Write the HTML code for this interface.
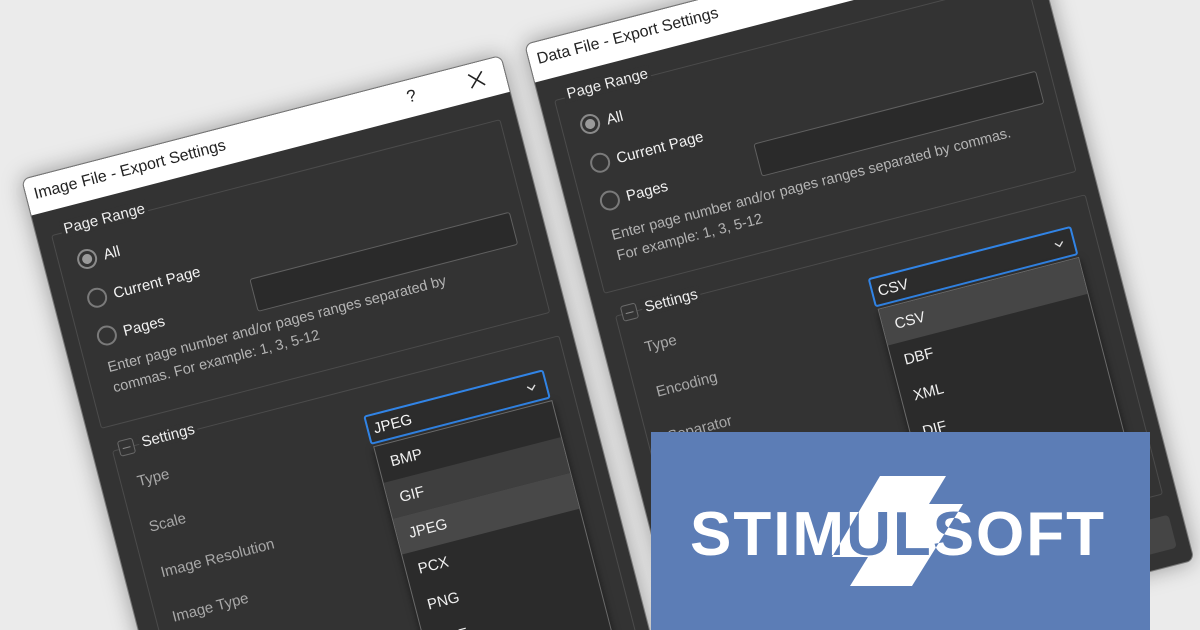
<!DOCTYPE html>
<html><head><meta charset="utf-8">
<style>
*{margin:0;padding:0;box-sizing:border-box}
html,body{width:1200px;height:630px;overflow:hidden;background:#ebebeb;font-family:"Liberation Sans",Arial,sans-serif}
#wrap{position:relative;width:1200px;height:630px;overflow:hidden;background:#ebebeb}
.dlg{position:absolute;transform-origin:0 0;transform:rotate(-14.5deg);background:#333;border:1px solid #777;border-radius:8px;box-shadow:0 0 22px rgba(0,0,0,.35);overflow:hidden}
.dlg *{position:absolute}
.tb{left:0;top:0;right:0;height:37px;background:#fff;}
.tt{left:8px;top:9px;font-size:16px;color:#222;white-space:nowrap}
.grp{border:1px solid #4b4b4b;border-radius:3px}
.lbl{font-size:15px;color:#eee;white-space:nowrap;background:#333;padding:0 3px}
.rad{width:20px;height:20px;border:2px solid #7a7a7a;border-radius:50%;background:#333}
.rad.on{border-color:#8a8a8a}
.rad.on::after{content:"";position:absolute;left:3px;top:3px;width:10px;height:10px;border-radius:50%;background:#9a9a9a}
.rt{font-size:15px;color:#f2f2f2;white-space:nowrap}
.inp{background:#2a2a2a;border:1px solid #606060;border-radius:3px}
.hint{font-size:14.5px;color:#b4b4b4;white-space:nowrap;line-height:21px}
.sl{font-size:15px;color:#a8a8a8;white-space:nowrap}
.combo{background:#2c2c2c;border:2px solid #3184e6;border-radius:3px}
.combo span{left:5px;top:5px;font-size:15px;color:#f4f4f4}
.list{background:#2b2b2b;border:1px solid #6a6a6a;box-shadow:0 3px 8px rgba(0,0,0,.5);overflow:hidden}
.it{left:0;right:0;height:37px;font-size:15px;color:#f0f0f0;padding:10px 0 0 12px}
.mn{width:16px;height:16px;border:1px solid #6a6a6a;border-radius:3px;background:#333}
.mn::after{content:"";position:absolute;left:3px;top:7px;width:8px;height:1px;background:#888}
</style></head><body><div id="wrap">

<div class="dlg" style="left:21px;top:179px;width:496px;height:800px">
  <div class="tb"><div class="tt">Image File - Export Settings</div>
    <div style="left:393px;top:7px;font-size:17px;color:#222">?</div>
    <svg style="left:456px;top:8px" width="18" height="18" viewBox="0 0 18 18"><path d="M2 2L16 16M16 2L2 16" stroke="#222" stroke-width="1.6"/></svg>
  </div>
  <div class="grp" style="left:14px;top:61px;width:464px;height:200px"></div>
  <div class="lbl" style="left:25px;top:50px">Page Range</div>
  <div class="rad on" style="left:33px;top:83px"></div><div class="rt" style="left:60px;top:85px">All</div>
  <div class="rad" style="left:33px;top:123px"></div><div class="rt" style="left:60px;top:125px">Current Page</div>
  <div class="rad" style="left:33px;top:162px"></div><div class="rt" style="left:60px;top:164px">Pages</div>
  <div class="inp" style="left:195px;top:153px;width:269px;height:34px"></div>
  <div class="hint" style="left:36px;top:194px">Enter page number and/or pages ranges separated by<br>commas. For example: 1, 3, 5-12</div>
  <div class="grp" style="left:19px;top:285px;width:462px;height:520px"></div>
  <div class="mn" style="left:26px;top:277px"></div>
  <div class="lbl" style="left:47px;top:276px">Settings</div>
  <div class="sl" style="left:36px;top:313px">Type</div>
  <div class="sl" style="left:36px;top:360px">Scale</div>
  <div class="sl" style="left:36px;top:407px">Image Resolution</div>
  <div class="sl" style="left:36px;top:453px">Image Type</div>
  <div class="sl" style="left:36px;top:499px">Dithering Type</div>
  <div class="combo" style="left:271px;top:314px;width:186px;height:30px"><span>JPEG</span>
    <svg style="left:163px;top:9px" width="10" height="8" viewBox="0 0 10 8"><path d="M1 2L5 6L9 2" stroke="#ddd" stroke-width="1.4" fill="none"/></svg></div>
  <div class="list" style="left:273px;top:346px;width:185px;height:260px">
    <div class="it" style="top:0">BMP</div>
    <div class="it" style="top:37px;background:#3e3e3e">GIF</div>
    <div class="it" style="top:74px;background:#484848">JPEG</div>
    <div class="it" style="top:111px">PCX</div>
    <div class="it" style="top:148px">PNG</div>
    <div class="it" style="top:185px">TIFF</div>
  </div>
</div>

<div class="dlg" style="left:524px;top:44px;width:520px;height:668px">
  <div class="tb" style="height:39px"><div class="tt">Data File - Export Settings</div></div>
  <div class="grp" style="left:14px;top:61px;width:488px;height:200px"></div>
  <div class="lbl" style="left:25px;top:50px">Page Range</div>
  <div class="rad on" style="left:33px;top:83px"></div><div class="rt" style="left:60px;top:85px">All</div>
  <div class="rad" style="left:33px;top:123px"></div><div class="rt" style="left:60px;top:125px">Current Page</div>
  <div class="rad" style="left:33px;top:162px"></div><div class="rt" style="left:60px;top:164px">Pages</div>
  <div class="inp" style="left:196px;top:153px;width:292px;height:34px"></div>
  <div class="hint" style="left:36px;top:197px">Enter page number and/or pages ranges separated by commas.<br>For example: 1, 3, 5-12</div>
  <div class="grp" style="left:19px;top:285px;width:486px;height:310px"></div>
  <div class="mn" style="left:26px;top:277px"></div>
  <div class="lbl" style="left:47px;top:276px">Settings</div>
  <div class="sl" style="left:40px;top:315px">Type</div>
  <div class="sl" style="left:40px;top:361px">Encoding</div>
  <div class="sl" style="left:40px;top:407px">Separator</div>
  <div class="combo" style="left:273px;top:312px;width:210px;height:30px"><span>CSV</span>
    <svg style="left:187px;top:9px" width="10" height="8" viewBox="0 0 10 8"><path d="M1 2L5 6L9 2" stroke="#ddd" stroke-width="1.4" fill="none"/></svg></div>
  <div class="list" style="left:275px;top:344px;width:208px;height:230px">
    <div class="it" style="top:0;background:#464646">CSV</div>
    <div class="it" style="top:37px">DBF</div>
    <div class="it" style="top:74px">XML</div>
    <div class="it" style="top:111px">DIF</div>
  </div>
  <div style="left:410px;top:616px;width:95px;height:34px;background:#454545;border-radius:4px"></div>
</div>

<svg style="position:absolute;left:651px;top:432px" width="499" height="198" viewBox="651 432 499 198">
  <defs><clipPath id="b"><polygon points="880,476 946,476 929,504 963,504 912,586 850,586 868,557 832,557"/></clipPath></defs>
  <rect x="651" y="432" width="499" height="198" fill="#5c7db6"/>
  <polygon points="880,476 946,476 929,504 963,504 912,586 850,586 868,557 832,557" fill="#fff"/>
  <text x="690" y="555" font-family="Liberation Sans,Arial,sans-serif" font-weight="bold" font-size="62" fill="#fff" letter-spacing="6" textLength="420" lengthAdjust="spacing">STIMULSOFT</text>
  <g clip-path="url(#b)"><text x="690" y="555" font-family="Liberation Sans,Arial,sans-serif" font-weight="bold" font-size="62" fill="#5c7db6" letter-spacing="6" textLength="420" lengthAdjust="spacing">STIMULSOFT</text></g>
</svg>
</div></body></html>
